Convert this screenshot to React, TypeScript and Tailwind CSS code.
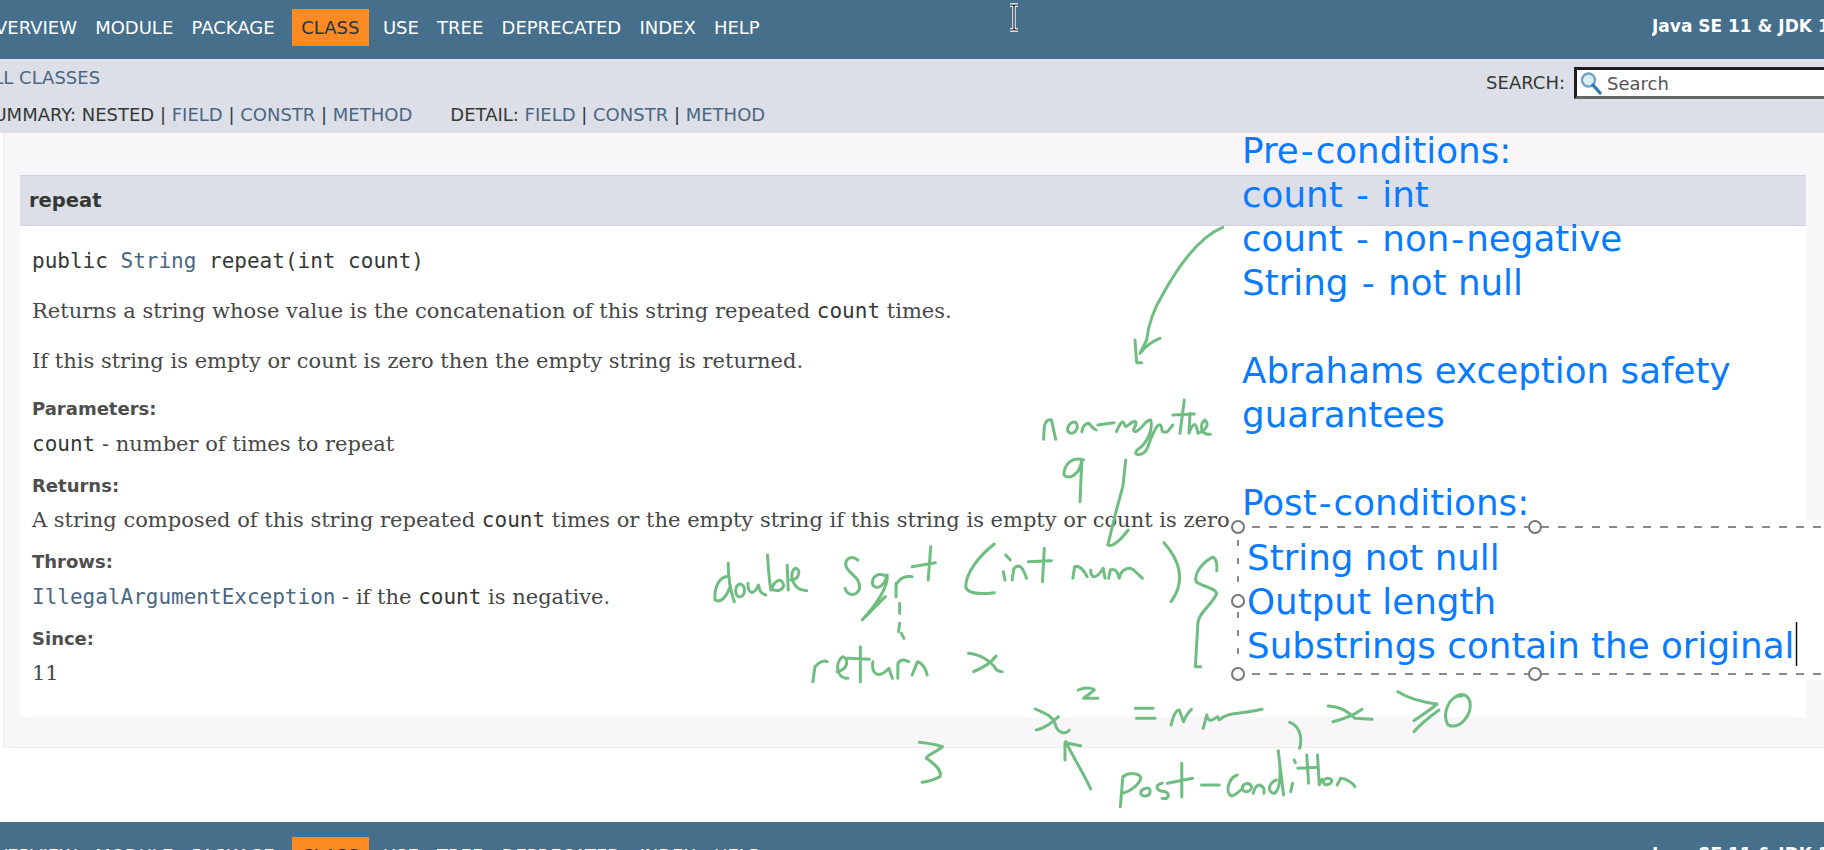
import React from "react";

const items = ["OVERVIEW", "MODULE", "PACKAGE", "CLASS", "USE", "TREE", "DEPRECATED", "INDEX", "HELP"];

function TopNav({ boxTop }: { boxTop: string }) {
  return (
    <div className={`flex bg-[#456f8b] h-[59px] shrink-0 text-white text-[18px] font-['DejaVu_Sans',sans-serif] ${boxTop}`}>
      <div className="flex -ml-[28px] shrink-0">
        {items.map((t) =>
          t === "CLASS" ? (
            <span key={t} className="h-[37px] leading-[37px] px-[9.5px] bg-[#fd8b22] text-[#253441] ml-[8px] mr-[5px]">{t}</span>
          ) : (
            <span key={t} className="h-[37px] leading-[37px] px-[9.1px]">{t}</span>
          )
        )}
      </div>
      <div className="flex-1" />
      <div className="w-[172px] shrink-0 overflow-hidden whitespace-nowrap font-bold text-[17px] leading-[35px]">Java SE 11 &amp; JDK 11</div>
    </div>
  );
}

function SearchIcon() {
  return (
    <svg width="24" height="24" viewBox="0 0 24 24" className="shrink-0" aria-hidden="true">
      <circle cx="9.5" cy="9" r="6.5" fill="#dcecf5" stroke="#6fa6c8" strokeWidth="2.4" />
      <path d="M14 14 L21 22" stroke="#2f7fb0" strokeWidth="3.4" strokeLinecap="round" />
    </svg>
  );
}

function Sep() {
  return <span className="text-[#353833]"> | </span>;
}

function Link({ children }: { children: React.ReactNode }) {
  return <span className="text-[#4a6782]">{children}</span>;
}

function Hy() {
  return <span className="mx-[2px]">-</span>;
}

const serif = "font-['DejaVu_Serif',serif] text-[21px] leading-[30px] text-[#474747] whitespace-nowrap";
const mono = "font-['DejaVu_Sans_Mono',monospace] text-[21px]";
const label = "font-['DejaVu_Sans',sans-serif] font-bold text-[18px] leading-[24px] text-[#4e4e4e]";

function Ink() {
  const common = {
    fill: "none",
    stroke: "#70bd82",
    strokeWidth: 3,
    strokeLinecap: "round" as const,
    strokeLinejoin: "round" as const,
  };
  const p = (d: string) => <path d={d} vectorEffect="non-scaling-stroke" {...common} />;
  return (
    <svg className="absolute left-0 top-0 w-[1824px] h-[850px] pointer-events-none" viewBox="0 0 1824 850" aria-hidden="true">
      <g transform="translate(680 400) scale(0.35714 0.33333)">
        {p("M1018 118 L1020 80 Q1025 55 1040 60 L1052 118")}
        {p("M1085 85 C1095 60 1115 60 1112 85 C1105 105 1085 105 1085 85")}
        {p("M1125 95 Q1130 70 1145 70 Q1155 85 1165 90")}
        {p("M1170 75 L1215 68")}
        {p("M1222 95 C1232 70 1240 55 1245 75 C1250 90 1262 60 1275 65 C1285 75 1260 90 1275 95 C1295 90 1300 60 1318 60 C1325 85 1310 130 1280 150 C1265 170 1300 170 1310 140 C1320 110 1335 70 1345 75 C1355 85 1340 100 1365 95 L1380 75")}
        {p("M1412 0 L1400 100 M1380 45 L1440 42")}
        {p("M1428 40 L1425 100 C1435 70 1445 60 1450 100 C1470 90 1485 75 1470 60 C1455 70 1455 105 1485 103")}
        {p("M1130 180 C1100 170 1075 190 1075 225 C1090 240 1120 225 1125 180 L1120 305")}
        {p("M1248 180 L1240 260 L1222 330 L1198 435 Q1215 445 1255 390")}
        {p("M138 530 C110 525 95 565 98 600 C115 610 130 590 140 560 M135 490 C135 530 140 570 152 605")}
        {p("M165 552 C150 565 155 595 170 590 C185 585 185 550 165 552")}
        {p("M190 550 C190 580 205 590 220 555 C222 570 225 580 240 585")}
        {p("M245 465 C248 510 250 550 255 570 C265 540 285 530 290 555 C288 575 265 575 255 565")}
        {p("M300 495 L303 570")}
        {p("M310 540 C335 540 340 505 322 505 C305 515 310 570 355 572")}
        {p("M498 480 C480 465 460 475 465 500 C475 525 505 530 503 565 C495 590 470 590 462 565")}
        {p("M580 530 C555 515 535 530 540 555 C555 575 575 550 580 525 C585 560 545 620 510 660 L575 590")}
        {p("M605 550 L605 590 M605 555 C620 525 640 530 650 530")}
        {p("M702 440 L695 540 M650 500 L715 488")}
        {p("M880 432 C835 470 800 520 800 560 C805 585 850 582 880 578")}
        {p("M912 465 L925 480 M905 515 L910 540")}
        {p("M930 540 L935 505 C950 490 960 500 970 535")}
        {p("M1020 445 L1015 545 M975 485 L1040 482")}
        {p("M1100 535 L1105 500 C1120 495 1130 510 1140 530")}
        {p("M1150 510 C1150 535 1165 540 1185 505 L1190 535")}
        {p("M1200 535 L1205 510 C1220 505 1225 515 1230 535 C1235 505 1260 500 1270 510 L1295 535")}
        {p("M1355 428 C1395 475 1420 540 1375 605")}
        {p("M1503 512 C1505 490 1500 472 1490 472 C1460 490 1440 520 1445 545 C1465 560 1500 565 1503 580 C1490 615 1450 640 1450 670 L1443 800 L1458 800")}
        {p("M615 610 L615 640 M615 670 L612 695 M620 700 L627 715")}
        {p("M372 845 L378 800 C390 785 405 780 412 785")}
        {p("M440 815 C470 810 475 775 455 770 C435 785 435 835 470 835")}
        {p("M505 740 L505 845 M470 775 L530 778")}
        {p("M540 785 C535 820 555 840 585 805 C590 820 590 825 595 835")}
        {p("M610 835 L610 790 C620 775 630 780 640 785")}
        {p("M650 825 L665 785 C680 790 690 810 692 825")}
        {p("M808 760 C845 765 870 785 880 800 C885 812 892 815 902 815 M885 768 C870 790 845 805 822 815")}
      </g>
      <g transform="translate(880 680) scale(0.35714 0.33333)">
        {p("M555 30 C575 20 600 25 600 30 C590 40 575 50 570 55 L610 55")}
        {p("M435 87 C460 100 480 105 490 130 C495 160 520 165 530 150 M500 110 C480 130 460 145 438 150")}
        {p("M715 85 L765 85 M718 115 L770 115")}
        {p("M815 135 Q825 90 838 90 L850 125 C855 110 865 95 872 88")}
        {p("M905 145 L915 105 C920 130 930 120 945 110 L950 120 C975 95 1000 105 1070 88")}
        {p("M1147 127 C1170 135 1185 165 1175 205")}
        {p("M1255 78 C1290 80 1310 95 1330 115 L1378 118 M1350 88 C1320 110 1290 120 1268 125")}
        {p("M1450 35 C1480 55 1510 65 1560 72 C1535 95 1510 110 1495 122 M1565 90 C1540 110 1515 130 1495 155")}
        {p("M110 187 C135 190 160 195 175 200 C160 215 130 225 130 235 C150 250 175 270 168 290 C150 300 135 305 118 307")}
        {p("M590 327 C570 280 540 230 520 185 M518 240 L518 188 L562 197")}
        {p("M673 380 L680 290 C700 275 730 280 730 295 C725 315 700 335 680 340")}
        {p("M745 325 C725 330 725 350 745 348 C760 345 760 320 745 325")}
        {p("M790 310 C765 315 775 335 800 335 C815 345 805 360 790 355")}
        {p("M845 250 L845 350 M805 310 L875 295")}
        {p("M900 315 L950 315")}
        {p("M1000 285 C975 295 965 340 985 348 C995 345 1005 335 1010 330")}
        {p("M1015 320 C1010 340 1040 340 1040 320 C1035 305 1020 310 1015 320 M1045 340 C1050 320 1060 305 1075 325 L1075 340")}
        {p("M1110 300 C1085 310 1085 340 1105 340 C1120 330 1125 280 1115 212 L1130 345")}
        {p("M1155 310 L1150 335 M1160 240 L1163 248")}
        {p("M1195 225 L1200 310 M1170 265 L1225 262")}
        {p("M1225 225 L1230 315 C1235 295 1240 295 1240 305")}
        {p("M1240 305 C1245 320 1265 315 1265 300 C1255 290 1245 295 1240 305")}
        {p("M1280 315 L1290 295 C1305 295 1325 310 1330 320")}
      </g>
      <g transform="translate(1100 120) scale(0.33333)">
        {p("M368 322 C300 350 240 430 190 520 C160 570 145 610 140 660 L120 700 M180 655 C155 665 135 680 125 695 M105 660 L110 728 L125 728")}
      </g>
      {p("M1462 696 C1448 695 1442 715 1448 725 C1460 730 1472 715 1470 702 C1468 695 1462 692 1455 697")}
    </svg>
  );
}

function Selection() {
  const handle = "fill-white stroke-[#777777] stroke-2";
  return (
    <svg className="absolute left-0 top-0 w-[1824px] h-[850px] pointer-events-none" viewBox="0 0 1824 850" aria-hidden="true">
      <g stroke="#8a8a8a" strokeWidth="2" fill="none">
        <path d="M1252 527 H1824" strokeDasharray="8 9" />
        <path d="M1252 674 H1824" strokeDasharray="8 9" />
        <path d="M1238 540 V664" strokeDasharray="6 12" />
      </g>
      <circle cx="1238" cy="527" r="6" className={handle} />
      <circle cx="1535" cy="527" r="6" className={handle} />
      <circle cx="1238" cy="601" r="6" className={handle} />
      <circle cx="1238" cy="674" r="6" className={handle} />
      <circle cx="1535" cy="674" r="6" className={handle} />
      <path d="M1796.5 622 V666" stroke="#111" strokeWidth="1.5" />
      <path d="M1010 5 H1013 L1014 6 L1015 5 H1018 M1014 6 V29 M1010 30 H1013 L1014 29 L1015 30 H1018" stroke="#fff" strokeWidth="3.4" fill="none" />
      <path d="M1010 5 H1013 L1014 6 L1015 5 H1018 M1014 6 V29 M1010 30 H1013 L1014 29 L1015 30 H1018" stroke="#111" strokeWidth="1.2" fill="none" />
    </svg>
  );
}

export default function App() {
  return (
    <div className="relative w-[1824px] h-[850px] overflow-hidden bg-white flex flex-col">
      <TopNav boxTop="pt-[9px]" />

      <div className="h-[74px] shrink-0 bg-[#dcdfe8] text-[18px] font-['DejaVu_Sans',sans-serif] text-[#353833] flex flex-col">
        <div className="flex h-[37px] items-start">
          <div className="-ml-[19px] leading-[38px] text-[#4a6782] whitespace-nowrap">ALL CLASSES</div>
          <div className="flex-1" />
          <div className="flex items-start mt-[8px] shrink-0">
            <span className="leading-[32px] mr-[9px]">SEARCH:</span>
            <div className="w-[260px] h-[32px] -mr-[10px] bg-white border-[3px] border-[#1d1d1d] border-b-[#666666] border-r-0 flex items-center pl-[2px] gap-[4px] overflow-hidden">
              <SearchIcon />
              <span className="text-[#555555] text-[18px]">Search</span>
            </div>
          </div>
        </div>
        <div className="flex -ml-[18px] h-[37px] leading-[38px] whitespace-pre">
          <span>SUMMARY: NESTED<Sep /><Link>FIELD</Link><Sep /><Link>CONSTR</Link><Sep /><Link>METHOD</Link></span>
          <span className="ml-[38px]">DETAIL: <Link>FIELD</Link><Sep /><Link>CONSTR</Link><Sep /><Link>METHOD</Link></span>
        </div>
      </div>

      <div className="h-[615px] shrink-0 ml-[3px] bg-[#f8f6f8] border-l border-b border-[#eeeeee] pt-[42px] pl-[16px] pr-[18px]">
        <div className="h-[51px] bg-[#dcdfe8] border-y border-[#d0d3dc] pl-[9px] font-['DejaVu_Sans',sans-serif] font-bold text-[19.5px] leading-[49px] text-[#353833]">repeat</div>
        <div className="h-[491px] bg-white pl-[12px] pt-[20px]">
          <div className={`${mono} leading-[30px] text-[#353833]`}>public <span className="text-[#4a6782]">String</span> repeat(int count)</div>
          <p className={`${serif} mt-[20px]`}>Returns a string whose value is the concatenation of this string repeated <span className={`${mono} text-[#353833]`}>count</span> times.</p>
          <p className={`${serif} mt-[20px]`}>If this string is empty or count is zero then the empty string is returned.</p>
          <div className={`${label} mt-[21px]`}>Parameters:</div>
          <p className={`${serif} mt-[8px]`}><span className={`${mono} text-[#353833]`}>count</span> - number of times to repeat</p>
          <div className={`${label} mt-[15px]`}>Returns:</div>
          <p className={`${serif} mt-[7px]`}>A string composed of this string repeated <span className={`${mono} text-[#353833]`}>count</span> times or the empty string if this string is empty or count is zero</p>
          <div className={`${label} mt-[15px]`}>Throws:</div>
          <p className={`${serif} mt-[8px]`}><span className={`${mono} text-[#4a6782]`}>IllegalArgumentException</span> - if the <span className={`${mono} text-[#353833]`}>count</span> is negative.</p>
          <div className={`${label} mt-[15px]`}>Since:</div>
          <p className={`${serif} mt-[7px]`}>11</p>
        </div>
      </div>

      <div className="h-[74px] shrink-0" />
      <TopNav boxTop="pt-[15px]" />

      <Ink />

      <div className="absolute left-[1242px] top-[129px] font-['DejaVu_Sans',sans-serif] text-[35.7px] leading-[44px] text-[#0a7bff] whitespace-pre">
        <div>Pre<Hy />conditions:</div>
        <div>count <Hy /> int</div>
        <div>count <Hy /> non<Hy />negative</div>
        <div>String <Hy /> not null</div>
        <div className="h-[44px]" />
        <div>Abrahams exception safety</div>
        <div>guarantees</div>
        <div className="h-[44px]" />
        <div>Post<Hy />conditions:</div>
      </div>

      <div className="absolute left-[1232px] top-[520px] w-[592px] h-[160px] bg-white pl-[15px] pt-[16px] font-['DejaVu_Sans',sans-serif] text-[35.7px] leading-[44px] text-[#0a7bff] whitespace-pre">
        {"String not null\nOutput length\nSubstrings contain the original"}
      </div>

      <Selection />
    </div>
  );
}
